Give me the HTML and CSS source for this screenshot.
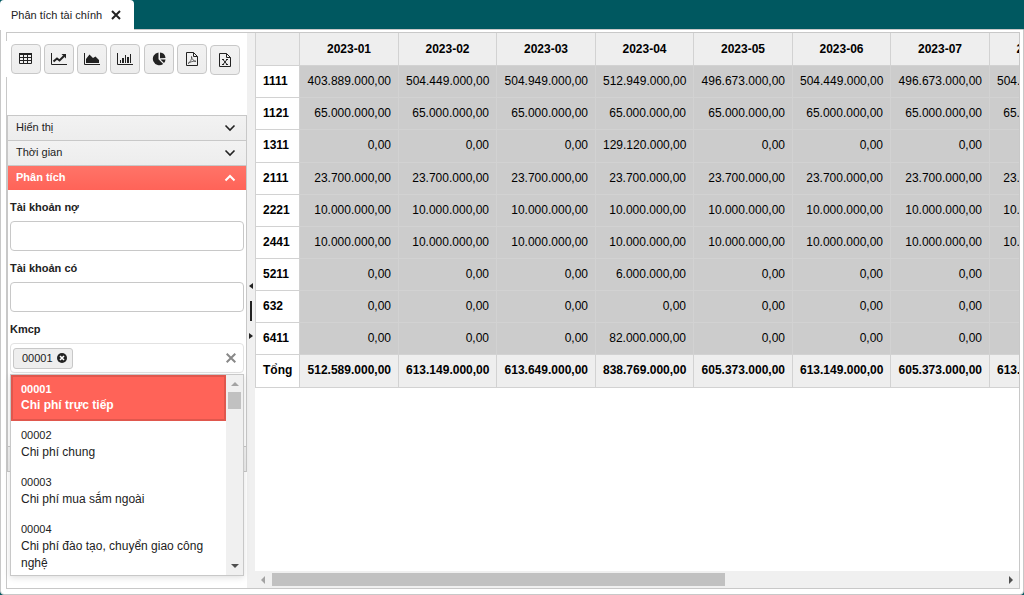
FILE: index.html
```html
<!DOCTYPE html>
<html lang="vi">
<head>
<meta charset="utf-8">
<title>Phân tích tài chính</title>
<link rel="stylesheet" href="styles.css">
</head>
<body>
<div class="tabs">
  <div class="tab">
    <span>Phân tích tài chính</span>
    <button class="tab-close" type="button" aria-label="Đóng"><svg width="10" height="10" viewBox="0 0 10 10"><path d="M1 1l8 8M9 1L1 9" stroke="#222" stroke-width="2"/></svg></button>
  </div>
</div>
<main class="window">
  <div class="frame">
    <aside class="side">
      <div class="toolbar">
        <button class="tool" type="button" aria-label="Bảng"><svg width="16" height="16" viewBox="0 0 16 16"><path d="M1.500 3.500h12v9h-12zM1.500 6.500h12M1.500 9.500h12M5.500 3v10M9.500 3v10" fill="none" stroke="#222"/><path d="M1 2h13v2H1z" fill="#222"/></svg></button>
        <button class="tool" type="button" aria-label="Biểu đồ đường"><svg width="16" height="16" viewBox="0 0 16 16"><path d="M.5 2v11.500H16" fill="none" stroke="#222"/><path d="M2.500 10.500l3.500-3 2.500 2L13 5" fill="none" stroke="#222" stroke-width="2"/><path d="M10.500 3H15v4.500z" fill="#222"/></svg></button>
        <button class="tool" type="button" aria-label="Biểu đồ vùng"><svg width="16" height="16" viewBox="0 0 16 16"><path d="M.5 2v11.500H16" fill="none" stroke="#222"/><path d="M2 12V8l3.500-4.500L9 7l2.500-1.500L15 9v3z" fill="#222"/></svg></button>
        <button class="tool" type="button" aria-label="Biểu đồ cột"><svg width="16" height="16" viewBox="0 0 16 16"><path d="M.5 2v11.500H16" fill="none" stroke="#222"/><path d="M3 9h1v3H3zM5 7h2v5H5zM8 4h1v8H8zM10 6h2v6h-2zM13 3h1v9h-1z" fill="#222"/></svg></button>
        <button class="tool" type="button" aria-label="Biểu đồ tròn"><svg width="16" height="16" viewBox="0 0 16 16"><path d="M7.500 1.500v6.700l4.700 4.700A6.400 6.400 0 1 1 7.500 1.500zM9 1.500A6 6 0 0 1 14.500 7L9 7.200zM9.500 8.500h5a6 6 0 0 1-1.500 3.500z" fill="#222"/></svg></button>
        <button class="tool" type="button" aria-label="Xuất PDF"><svg width="16" height="16" viewBox="0 0 16 16"><path d="M2.500 1.500h7l4 4v9h-11zM9.500 1.500v4h4" fill="none" stroke="#222"/><path d="M4 12.500c2.500-1.500 4-4.500 3.500-7 .5 3 2 4.500 4.500 4.800-3-.3-5.500.4-8 2.200z" fill="none" stroke="#444" stroke-width=".8"/></svg></button>
        <button class="tool tool-low" type="button" aria-label="Xuất Excel"><svg width="16" height="16" viewBox="0 0 16 16"><path d="M2.500 1.500h7l4 4v9h-11zM9.500 1.500v4h4" fill="none" stroke="#222"/><path d="M6 7.500l4 5M10 7.500l-4 5M5 7.500h2M9 7.500h2M5 12.500h2M9 12.500h2" fill="none" stroke="#222"/></svg></button>
      </div>
      <div class="accordion">
        <button class="acc" type="button">Hiển thị<svg width="12" height="8" viewBox="0 0 12 8"><path d="M1.500 1.500L6 6l4.500-4.500" fill="none" stroke="currentColor" stroke-width="1.600"/></svg></button>
        <button class="acc" type="button">Thời gian<svg width="12" height="8" viewBox="0 0 12 8"><path d="M1.500 1.500L6 6l4.500-4.500" fill="none" stroke="currentColor" stroke-width="1.600"/></svg></button>
        <button class="acc active" type="button">Phân tích<svg width="12" height="8" viewBox="0 0 12 8"><path d="M1.500 6.500L6 2l4.500 4.500" fill="none" stroke="currentColor" stroke-width="2"/></svg></button>
        <div class="panel">
          <label for="debit">Tài khoản nợ</label>
          <input class="text" id="debit" type="text">
          <label for="credit">Tài khoản có</label>
          <input class="text" id="credit" type="text">
          <label for="kmcp">Kmcp</label>
          <div class="multi">
            <span class="chip">00001<button type="button" aria-label="Bỏ 00001"><svg width="10" height="10" viewBox="0 0 10 10"><circle cx="5" cy="5" r="5" fill="#222"/><path d="M3 3l4 4M7 3L3 7" stroke="#fff" stroke-width="1.600"/></svg></button></span>
            <input id="kmcp" type="text">
            <button type="button" aria-label="Xóa"><svg width="10" height="10" viewBox="0 0 10 10"><path d="M.7.7l8.600 8.600M9.300.7L.7 9.300" stroke="#888" stroke-width="2"/></svg></button>
            <div class="popup">
              <ul class="list">
                <li class="selected"><span class="code">00001</span>Chi phí trực tiếp</li>
                <li><span class="code">00002</span>Chi phí chung</li>
                <li><span class="code">00003</span>Chi phí mua sắm ngoài</li>
                <li><span class="code">00004</span>Chi phí đào tạo, chuyển giao công nghệ</li>
              </ul>
              <div class="vbar">
                <svg width="8" height="4" viewBox="0 0 8 4"><path d="M0 4l4-4 4 4z" fill="#a3a3a3"/></svg>
                <div class="vthumb"></div>
                <svg width="8" height="4" viewBox="0 0 8 4"><path d="M0 0l4 4 4-4z" fill="#505050"/></svg>
              </div>
            </div>
          </div>
        </div>
        <div class="acc"></div>
      </div>
    </aside>
    <div class="splitter">
      <svg width="4" height="6" viewBox="0 0 4 6"><path d="M4 0v6L0 3z" fill="#222"/></svg>
      <div class="grip"></div>
      <svg width="4" height="6" viewBox="0 0 4 6"><path d="M0 0v6l4-3z" fill="#222"/></svg>
    </div>
    <section class="content">
      <div class="viewport">
        <table>
          <colgroup><col class="c-head"><col class="c-a"><col class="c-b"><col class="c-a"><col class="c-b"><col class="c-a"><col class="c-b"><col class="c-a"><col class="c-b"></colgroup>
          <thead><tr><td></td><th>2023-01</th><th>2023-02</th><th>2023-03</th><th>2023-04</th><th>2023-05</th><th>2023-06</th><th>2023-07</th><th>2023-08</th></tr></thead>
          <tbody>
            <tr><th>1111</th><td>403.889.000,00</td><td>504.449.000,00</td><td>504.949.000,00</td><td>512.949.000,00</td><td>496.673.000,00</td><td>504.449.000,00</td><td>496.673.000,00</td><td>504.449.000,00</td></tr>
            <tr><th>1121</th><td>65.000.000,00</td><td>65.000.000,00</td><td>65.000.000,00</td><td>65.000.000,00</td><td>65.000.000,00</td><td>65.000.000,00</td><td>65.000.000,00</td><td>65.000.000,00</td></tr>
            <tr class="tall"><th>1311</th><td>0,00</td><td>0,00</td><td>0,00</td><td>129.120.000,00</td><td>0,00</td><td>0,00</td><td>0,00</td><td>0,00</td></tr>
            <tr><th>2111</th><td>23.700.000,00</td><td>23.700.000,00</td><td>23.700.000,00</td><td>23.700.000,00</td><td>23.700.000,00</td><td>23.700.000,00</td><td>23.700.000,00</td><td>23.700.000,00</td></tr>
            <tr><th>2221</th><td>10.000.000,00</td><td>10.000.000,00</td><td>10.000.000,00</td><td>10.000.000,00</td><td>10.000.000,00</td><td>10.000.000,00</td><td>10.000.000,00</td><td>10.000.000,00</td></tr>
            <tr><th>2441</th><td>10.000.000,00</td><td>10.000.000,00</td><td>10.000.000,00</td><td>10.000.000,00</td><td>10.000.000,00</td><td>10.000.000,00</td><td>10.000.000,00</td><td>10.000.000,00</td></tr>
            <tr><th>5211</th><td>0,00</td><td>0,00</td><td>0,00</td><td>6.000.000,00</td><td>0,00</td><td>0,00</td><td>0,00</td><td>0,00</td></tr>
            <tr><th>632</th><td>0,00</td><td>0,00</td><td>0,00</td><td>0,00</td><td>0,00</td><td>0,00</td><td>0,00</td><td>0,00</td></tr>
            <tr><th>6411</th><td>0,00</td><td>0,00</td><td>0,00</td><td>82.000.000,00</td><td>0,00</td><td>0,00</td><td>0,00</td><td>0,00</td></tr>
          </tbody>
          <tfoot><tr class="tall"><th>Tổng</th><td>512.589.000,00</td><td>613.149.000,00</td><td>613.649.000,00</td><td>838.769.000,00</td><td>605.373.000,00</td><td>613.149.000,00</td><td>605.373.000,00</td><td>613.149.000,00</td></tr></tfoot>
        </table>
      </div>
      <div class="hbar">
        <svg width="4" height="8" viewBox="0 0 4 8"><path d="M4 0v8L0 4z" fill="#a3a3a3"/></svg>
        <div class="track"><div class="hthumb"></div></div>
        <svg width="4" height="8" viewBox="0 0 4 8"><path d="M0 0v8l4-4z" fill="#505050"/></svg>
      </div>
    </section>
  </div>
</main>
</body>
</html>
```
FILE: styles.css
```css
* { box-sizing: border-box; }
body {
  margin: 0;
  height: 100vh;
  display: flex;
  flex-direction: column;
  overflow: hidden;
  background: #005860;
  color: #222;
  font: 11px/16px "Liberation Sans", Arial, sans-serif;
}
button { padding: 0; border: 0; background: none; font: inherit; color: inherit; }
svg { display: block; flex: none; }
input { font: inherit; }

.tabs { display: flex; height: 29px; }
.tab {
  display: flex;
  align-items: center;
  gap: 9px;
  height: 30px;
  padding: 0 13px 0 11px;
  background: #fff;
  border-radius: 4px 4px 0 0;
  z-index: 1;
}
.window {
  flex: 1;
  display: flex;
  min-height: 0;
  padding: 2px 3px 5px 5px;
  background: #fff;
  border: 1px solid #c8c8c8;
  border-radius: 0 0 4px 4px;
}
.frame { flex: 1; display: flex; min-width: 0; border: 1px solid #c8c8c8; }

.side { flex: none; width: 240px; display: flex; flex-direction: column; }
.toolbar {
  display: flex;
  align-items: flex-start;
  justify-content: space-between;
  height: 36px;
  margin: 8px 0 38px -1px;
  padding: 3px 7px 0 5px;
  background: #fff;
}
.tool {
  display: grid;
  place-items: center;
  width: 30px;
  height: 30px;
  border: 1px solid #c8c8c8;
  border-radius: 4px;
  background: linear-gradient(#f2f2f2, #ededed);
}
.tool-low { margin-top: 1px; }

.accordion { border: solid #c8c8c8; border-width: 1px 1px 0; }
.acc {
  display: flex;
  align-items: center;
  justify-content: space-between;
  width: 100%;
  height: 25px;
  padding: 0 10px 2px 8px;
  border-bottom: 1px solid #c8c8c8;
  background: linear-gradient(#f2f2f2, #ededed);
}
.acc svg { margin-top: 2px; }
.acc.active {
  height: 24px;
  border: 0;
  background: linear-gradient(#ff7468, #ff6358);
  color: #fff;
  font-weight: bold;
}
.panel { display: flex; flex-direction: column; height: 257px; padding: 9px 2px 0; border-bottom: 1px solid #c8c8c8; }
.panel label { font-weight: bold; margin-bottom: 6px; }
.text { height: 30px; margin-bottom: 9px; border: 1px solid #c8c8c8; border-radius: 4px; background: #fff; }
.multi {
  position: relative;
  display: flex;
  align-items: center;
  height: 30px;
  padding: 0 7px 0 2px;
  border: 1px solid #e2e2e2;
  border-radius: 4px;
}
.multi > input { flex: 1; min-width: 0; border: 0; outline: 0; background: none; }
.chip {
  display: flex;
  align-items: center;
  gap: 4px;
  height: 21px;
  padding: 0 5px 0 8px;
  border: 1px solid #c8c8c8;
  border-radius: 3px;
  background: #eee;
}

.popup {
  position: absolute;
  top: 30px;
  left: -1px;
  right: -1px;
  display: flex;
  height: 202px;
  overflow: hidden;
  border: 1px solid #c8c8c8;
  background: #fff;
  box-shadow: 0 2px 6px rgba(0, 0, 0, .12);
}
.list { flex: 1; margin: 0; padding: 0; list-style: none; font-size: 12px; line-height: 17px; }
.list li { padding: 6px 10px 7px; }
.list .code { display: block; font-size: 11px; }
.list .selected {
  padding: 4px 8px 6px;
  line-height: 16px;
  border: 2px solid #e0574d;
  background: #ff6358;
  color: #fff;
  font-weight: bold;
}
.vbar { display: flex; flex-direction: column; align-items: center; width: 17px; padding: 7px 2px; background: #f0f0f0; }
.vthumb { width: 13px; height: 17px; margin: 6px 0 auto; background: #c1c1c1; }

.splitter {
  flex: none;
  display: flex;
  flex-direction: column;
  align-items: center;
  justify-content: center;
  gap: 10px;
  width: 8px;
  background: #f0f0f0;
}
.grip { width: 2px; height: 20px; margin: 2px 0; background: #222; }

.content { flex: 1; min-width: 0; display: flex; flex-direction: column; }
.viewport { flex: 1; overflow: hidden; }
table {
  width: 833px;
  table-layout: fixed;
  border-spacing: 0;
  border-left: 1px solid #d2d2d2;
  color: #000;
  font-size: 12px;
}
.c-head { width: 44px; }
.c-a { width: 99px; }
.c-b { width: 98px; }
th, td { height: 32px; padding: 0 7px 2px; border: solid #d2d2d2; border-width: 0 1px 1px 0; text-align: right; }
tbody th, tfoot th { text-align: left; }
thead th, thead td { height: 33px; padding-bottom: 0; background: #eee; text-align: center; }
tbody td { background: #ccc; }
tfoot td { background: #eee; font-weight: bold; }
.tall th, .tall td { height: 33px; }
.hbar { display: flex; align-items: center; gap: 7px; height: 17px; padding: 0 6px; background: #f0f0f0; }
.track { flex: 1; }
.hthumb { width: 62%; height: 13px; background: #c1c1c1; }
```
